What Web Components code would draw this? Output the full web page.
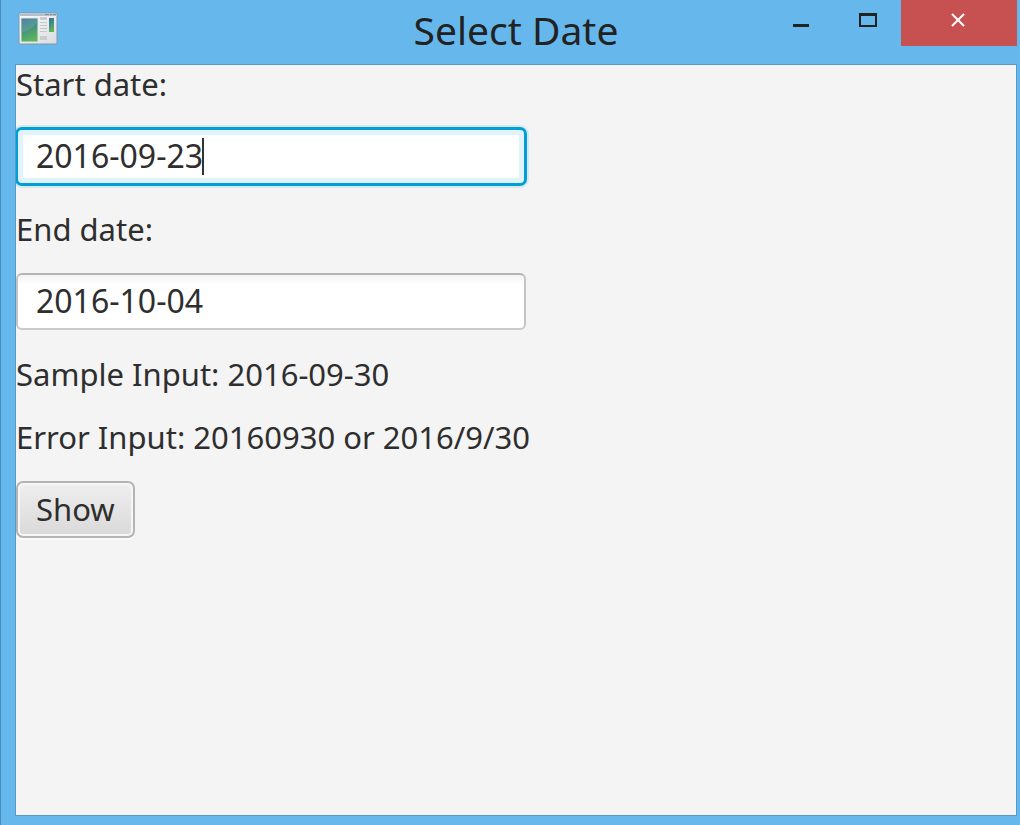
<!DOCTYPE html>
<html lang="en">
<head>
<meta charset="utf-8">
<title>Select Date</title>
<style>
html, body { height: 100%; margin: 0; }
body { font-family: "Noto Sans", "Open Sans", sans-serif; color: #2e2e2e; }
</style>
</head>
<body>
<app-window caption="Select Date">
  <date-form>
    <date-field label="Start date:" value="2016-09-23" active></date-field>
    <date-field label="End date:" value="2016-10-04"></date-field>
    <hint-text>Sample Input: 2016-09-30</hint-text>
    <hint-text>Error Input: 20160930 or 2016/9/30</hint-text>
    <push-button>Show</push-button>
  </date-form>
</app-window>
<script>
function define(name, html, setup) {
  const tpl = document.createElement('template');
  tpl.innerHTML = html;
  customElements.define(name, class extends HTMLElement {
    constructor() {
      super();
      this.attachShadow({ mode: 'open' }).append(tpl.content.cloneNode(true));
    }
    connectedCallback() { if (setup) setup(this, this.shadowRoot); }
  });
}

define('app-icon', `
<style>:host { display: block; width: 40px; height: 34px; } svg { display: block; }</style>
<svg width="40" height="34" viewBox="0 0 40 34" aria-hidden="true">
  <defs>
    <linearGradient id="g" x1="0" y1="0" x2=".3" y2="1"><stop offset="0" stop-color="#3a6c9e"/><stop offset=".45" stop-color="#3f8c86"/><stop offset="1" stop-color="#5db45c"/></linearGradient>
    <linearGradient id="w" x1="0" y1="0" x2="1" y2="1"><stop offset="0" stop-color="#fdfdfd"/><stop offset="1" stop-color="#d9dcde"/></linearGradient>
  </defs>
  <rect x="1" y="1" width="38" height="31" rx="1" fill="url(#w)" stroke="#7c98ab"/>
  <rect x="2" y="2" width="36" height="2" fill="#b4bfc8"/>
  <path d="M27 2h4v1h-4zM32 2h2v1h-2zM35 2h3v1h-3z" fill="#7e8e9a"/>
  <rect x="3" y="6" width="17" height="24" fill="url(#g)" stroke="#e2e8e6"/>
  <path d="M4 20Q12 19 19 11V7H4z" fill="#fff" opacity=".12"/>
  <path d="M22 5h7v3h-7zM22 24h7v4h-7z" fill="#c9cccd"/>
  <path d="M22 10.500h7M22 13.500h7M22 16.500h7M22 19.500h7" stroke="#c3c7c9"/>
  <rect x="31" y="6" width="5" height="14" fill="url(#g)"/>
</svg>`);

define('title-bar', `
<style>
:host { display: grid; grid-template-columns: 1fr auto 1fr; height: 64px; }
app-icon { margin: 12px 0 0 3px; }
h1 { margin: 0; font-size: 39px; line-height: 60px; font-weight: 400; color: #222; white-space: nowrap; }
.controls { display: flex; justify-content: flex-end; align-items: flex-start; }
button { width: 67px; height: 46px; padding: 0; border: 0; background: none; display: flex; justify-content: center; }
.close { width: 116px; background: #c75050; }
svg { display: block; }
</style>
<app-icon></app-icon>
<h1></h1>
<div class="controls">
  <button aria-label="Minimize"><svg width="18" height="40"><path d="M1 24h16v3H1z" fill="#222"/></svg></button>
  <button aria-label="Maximize"><svg width="18" height="40"><path fill-rule="evenodd" d="M0 13h18v14H0zM2 16v9h14v-9z" fill="#222"/></svg></button>
  <button class="close" aria-label="Close"><svg width="16" height="40"><path d="M1 14L13 26M13 14L1 26" stroke="#fff" stroke-width="2"/></svg></button>
</div>`, (el, root) => { root.querySelector('h1').textContent = el.getAttribute('caption'); });

define('app-window', `
<style>
:host { display: flex; flex-direction: column; box-sizing: border-box; min-height: 100vh; background: #66b7eb; border-left: 1px solid #4a8cb9; padding: 0 3px 9px 14px; }
main { flex: 1; background: #f4f4f4; border: 1px solid #5599c8; overflow: clip; }
</style>
<title-bar></title-bar>
<main><slot></slot></main>`, (el, root) => {
  const bar = root.querySelector('title-bar');
  bar.setAttribute('caption', el.getAttribute('caption'));
  bar.shadowRoot.querySelector('h1').textContent = el.getAttribute('caption');
});

define('date-form', `
<style>:host { display: flex; flex-direction: column; align-items: flex-start; gap: 25px; font-size: 31px; line-height: 38px; }</style>
<slot></slot>`);

define('date-field', `
<style>
:host { display: flex; flex-direction: column; gap: 25px; width: 510px; max-width: 100%; }
.box { position: relative; display: flex; font-size: 32px; }
input { box-sizing: border-box; width: 100%; height: 57px; margin: 0; padding: 0 18px 2px; border: 2px solid; border-color: #b5b5b5 #c4c4c4 #cacaca; border-radius: 6px; font: inherit; color: inherit; outline: none; background: linear-gradient(#f3f3f3, #fff 10px); }
:host([active]) input { border-color: #039ed3; caret-color: transparent; background: #fff; box-shadow: 0 0 0 1px #039ed3, 0 0 0 3px #d3e9f3, inset 0 0 0 5px #e0f3fb; }
.caret { display: none; position: absolute; left: 186px; top: 10px; width: 2px; height: 37px; background: #333; }
:host([active]) .caret { display: block; }
</style>
<label for="date"></label>
<div class="box"><input id="date" type="text"><span class="caret"></span></div>`, (el, root) => {
  root.querySelector('label').textContent = el.getAttribute('label');
  root.querySelector('input').value = el.getAttribute('value');
});

define('hint-text', `
<style>:host { display: block; white-space: nowrap; }</style>
<slot></slot>`);

define('push-button', `
<style>
:host { display: block; }
button { height: 57px; margin: 0; padding: 0 18px 2px; border: 2px solid #b4b4b4; border-radius: 7px; font: inherit; color: inherit; background: linear-gradient(#efefef, #d9d9d9); box-shadow: inset 0 0 0 2px #f6f6f6, 0 2px 0 #fafafa; }
</style>
<button type="button"><slot></slot></button>`);
</script>
</body>
</html>
